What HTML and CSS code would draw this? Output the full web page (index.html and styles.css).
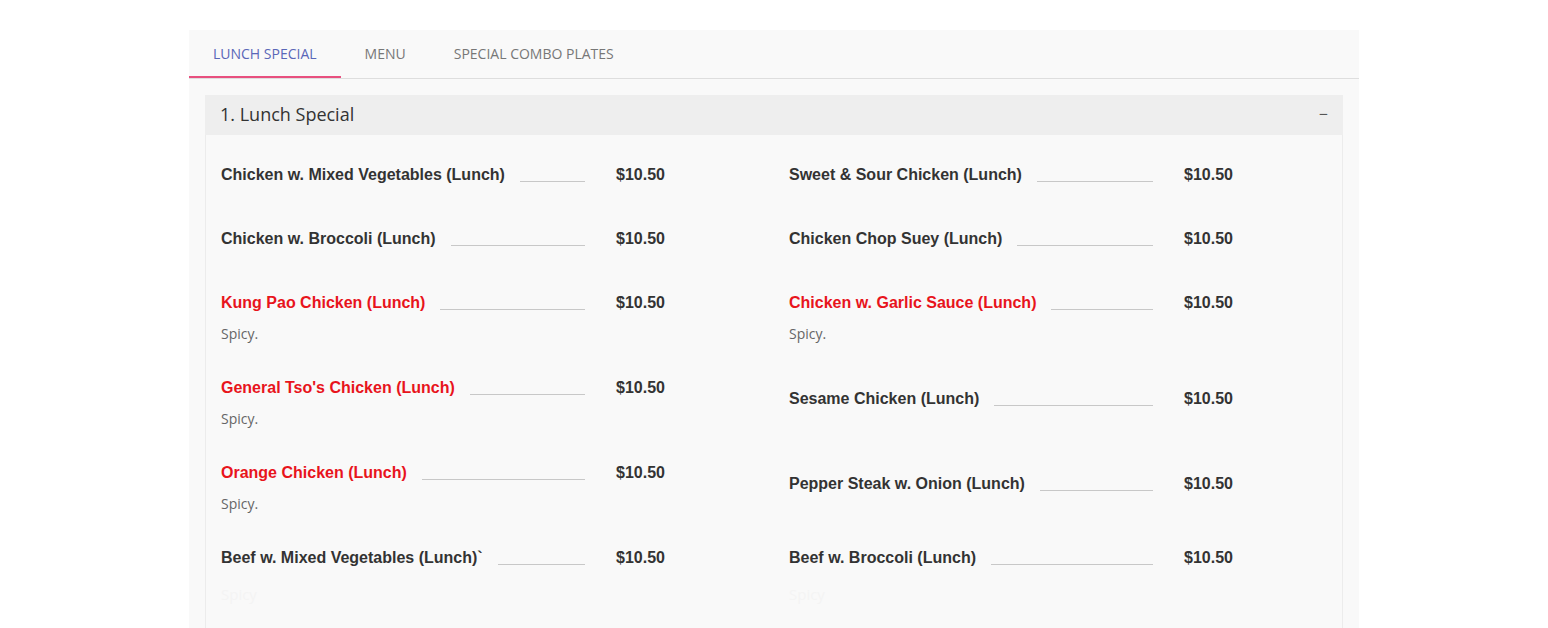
FILE: index.html
```html
<!DOCTYPE html>
<html>
<head>
<meta charset="utf-8">
<title>Lunch Special</title>
<link rel="stylesheet" href="styles.css">
</head>
<body>
<div class="container">
  <ul class="tabs">
    <li class="tab active">Lunch Special</li>
    <li class="tab">Menu</li>
    <li class="tab">Special Combo Plates</li>
  </ul>
  <div class="tab-content">
    <div class="panel">
      <div class="panel-heading">
        <span class="panel-title">1. Lunch Special</span>
        <span class="toggle">&minus;</span>
      </div>
      <div class="panel-body">
        <div class="menu-row">
          <div class="item"><div class="item-line"><span class="name">Chicken w. Mixed Vegetables (Lunch)</span><span class="dots"></span><span class="price">$10.50</span></div></div>
          <div class="item"><div class="item-line"><span class="name">Sweet &amp; Sour Chicken (Lunch)</span><span class="dots"></span><span class="price">$10.50</span></div></div>
        </div>
        <div class="menu-row">
          <div class="item"><div class="item-line"><span class="name">Chicken w. Broccoli (Lunch)</span><span class="dots"></span><span class="price">$10.50</span></div></div>
          <div class="item"><div class="item-line"><span class="name">Chicken Chop Suey (Lunch)</span><span class="dots"></span><span class="price">$10.50</span></div></div>
        </div>
        <div class="menu-row">
          <div class="item"><div class="item-line"><span class="name spicy">Kung Pao Chicken (Lunch)</span><span class="dots"></span><span class="price">$10.50</span></div><p class="desc">Spicy.</p></div>
          <div class="item"><div class="item-line"><span class="name spicy">Chicken w. Garlic Sauce (Lunch)</span><span class="dots"></span><span class="price">$10.50</span></div><p class="desc">Spicy.</p></div>
        </div>
        <div class="menu-row">
          <div class="item"><div class="item-line"><span class="name spicy">General Tso's Chicken (Lunch)</span><span class="dots"></span><span class="price">$10.50</span></div><p class="desc">Spicy.</p></div>
          <div class="item"><div class="item-line"><span class="name">Sesame Chicken (Lunch)</span><span class="dots"></span><span class="price">$10.50</span></div></div>
        </div>
        <div class="menu-row">
          <div class="item"><div class="item-line"><span class="name spicy">Orange Chicken (Lunch)</span><span class="dots"></span><span class="price">$10.50</span></div><p class="desc">Spicy.</p></div>
          <div class="item"><div class="item-line"><span class="name">Pepper Steak w. Onion (Lunch)</span><span class="dots"></span><span class="price">$10.50</span></div></div>
        </div>
        <div class="menu-row">
          <div class="item"><div class="item-line"><span class="name">Beef w. Mixed Vegetables (Lunch)`</span><span class="dots"></span><span class="price">$10.50</span></div><p class="desc faint">Spicy</p></div>
          <div class="item"><div class="item-line"><span class="name">Beef w. Broccoli (Lunch)</span><span class="dots"></span><span class="price">$10.50</span></div><p class="desc faint">Spicy</p></div>
        </div>
      </div>
    </div>
  </div>
</div>
</body>
</html>
```
FILE: styles.css
```css
html, body {
  margin: 0;
  padding: 0;
  background: #ffffff;
  font-family: "Open Sans", "Liberation Sans", sans-serif;
  color: #333;
}

.container {
  width: 1170px;
  margin: 30px auto 0;
  background: #f9f9f9;
}

.tabs {
  list-style: none;
  margin: 0;
  padding: 0;
  display: flex;
  height: 48px;
  border-bottom: 1px solid #dedede;
}

.tab {
  padding: 1px 24px 0;
  font-size: 14px;
  line-height: 45px;
  text-transform: uppercase;
  color: #777;
  border-bottom: 2px solid transparent;
}

.tab.active {
  color: #5a67b8;
  border-bottom-color: #e8507f;
}

.tab-content {
  padding: 16px 16px 0;
}

.panel-heading {
  background: #eeeeee;
  height: 40px;
  display: flex;
  align-items: center;
  justify-content: space-between;
  padding: 0 15px;
}

.panel-title {
  font-size: 18px;
  color: #333;
  margin-top: -2px;
}

.toggle {
  font-size: 16px;
  color: #555;
  margin-top: -2px;
}

.panel-body {
  border-left: 1px solid #ececec;
  border-right: 1px solid #ececec;
  padding-top: 14px;
  height: 480px;
}

.menu-row {
  display: grid;
  grid-template-columns: 568px 568px;
  align-items: center;
  padding: 16px 0 17px;
}

.item {
  padding: 0 15px;
  min-height: 31px;
}

.item-line {
  display: flex;
  width: 443px;
  height: 20px;
  align-items: flex-end;
}

.name {
  font-family: "Liberation Sans", Arial, sans-serif;
  font-weight: bold;
  font-size: 16px;
  line-height: 20px;
  color: #333;
  white-space: nowrap;
}

.name.spicy {
  color: #e8141c;
}

.dots {
  flex: 1;
  height: 0;
  border-bottom: 1px solid #c8c8c8;
  margin: 0 0 3px 15px;
}

.price {
  width: 79px;
  padding-left: 31px;
  box-sizing: border-box;
  text-align: left;
  font-family: "Liberation Sans", Arial, sans-serif;
  font-weight: bold;
  font-size: 16px;
  line-height: 20px;
  color: #333;
}

.desc {
  margin: 10px 0 0;
  font-size: 14px;
  line-height: 22px;
  color: #666;
}

.desc.faint {
  margin-top: 15px;
  font-size: 15px;
  color: #f4f4f4;
}
```
